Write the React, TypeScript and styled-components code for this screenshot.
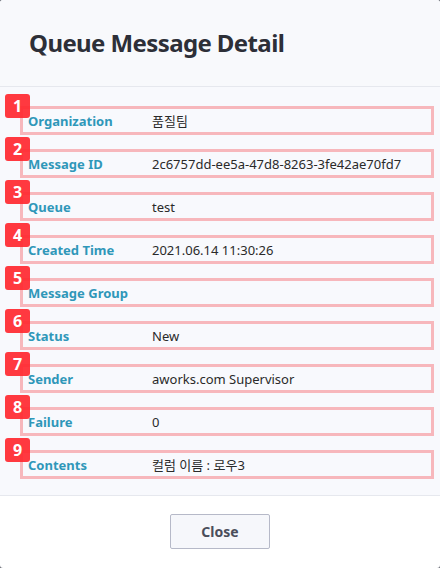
import React from "react"
import styled, { createGlobalStyle } from "styled-components"

const GlobalStyle = createGlobalStyle`
  html, body {
    margin: 0;
    padding: 0;
    background: #6b6e78;
  }
  * {
    box-sizing: border-box;
  }
`

const Dialog = styled.div`
  width: 440px;
  height: 568px;
  background: #ffffff;
  border-radius: 3px;
  overflow: hidden;
  display: flex;
  flex-direction: column;
  font-family: "Noto Sans", "Noto Sans CJK KR", sans-serif;
`

const Header = styled.div`
  height: 87px;
  background: #f8f9fc;
  border-bottom: 1px solid #e6e8ee;
  display: flex;
  align-items: center;
  padding: 0 0 2px 29px;
`

const Title = styled.h2`
  margin: 0;
  font-size: 24px;
  font-weight: 700;
  color: #2d2f38;
  letter-spacing: -0.6px;
`

const Body = styled.div`
  background: #f8f9fd;
  border-bottom: 1px solid #e6e8ee;
  padding: 19px 6px 16px 20px;
  display: flex;
  flex-direction: column;
  gap: 14px;
`

const Row = styled.div`
  position: relative;
  height: 29px;
  border: 3px solid rgba(247, 160, 166, 0.75);
  display: flex;
  align-items: center;
  padding: 0 0 0 5px;
`

const Badge = styled.span`
  position: absolute;
  left: -18px;
  top: -15px;
  width: 25px;
  height: 24px;
  border-radius: 3px;
  background: rgba(255, 40, 48, 0.92);
  color: #ffffff;
  font-size: 16px;
  font-weight: 700;
  display: flex;
  align-items: center;
  justify-content: center;
  line-height: 1;
`

const Label = styled.span`
  width: 124px;
  flex-shrink: 0;
  font-size: 13px;
  font-weight: 700;
  color: #2f97b9;
`

const Value = styled.span`
  font-size: 13px;
  color: #2a2a2a;
`

const Footer = styled.div`
  flex: 1;
  display: flex;
  justify-content: center;
  padding-top: 18px;
`

const CloseButton = styled.button`
  width: 100px;
  height: 35px;
  background: #f6f7fb;
  border: 1px solid #b6b9c8;
  border-radius: 2px;
  font-family: "Noto Sans", sans-serif;
  font-size: 14px;
  font-weight: 700;
  color: #4b4e5b;
  cursor: pointer;
`

const fields: [string, string][] = [
  ["Organization", "품질팀"],
  ["Message ID", "2c6757dd-ee5a-47d8-8263-3fe42ae70fd7"],
  ["Queue", "test"],
  ["Created Time", "2021.06.14 11:30:26"],
  ["Message Group", ""],
  ["Status", "New"],
  ["Sender", "aworks.com Supervisor"],
  ["Failure", "0"],
  ["Contents", "컬럼 이름 : 로우3"],
]

export default function App() {
  return (
    <>
      <GlobalStyle />
      <Dialog>
        <Header>
          <Title>Queue Message Detail</Title>
        </Header>
        <Body>
          {fields.map(([label, value], i) => (
            <Row key={label}>
              <Badge>{i + 1}</Badge>
              <Label>{label}</Label>
              <Value>{value}</Value>
            </Row>
          ))}
        </Body>
        <Footer>
          <div>
            <CloseButton>Close</CloseButton>
          </div>
        </Footer>
      </Dialog>
    </>
  )
}
